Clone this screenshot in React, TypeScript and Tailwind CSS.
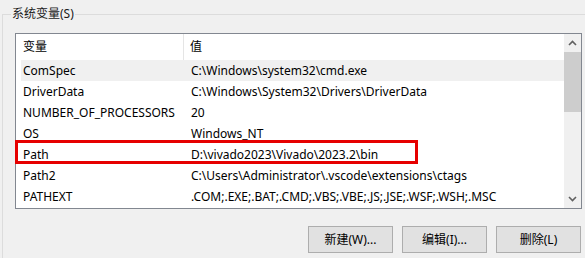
import React from "react";

const ROWS = [
  { name: "ComSpec", value: "C:\\Windows\\system32\\cmd.exe", hot: true },
  { name: "DriverData", value: "C:\\Windows\\System32\\Drivers\\DriverData" },
  { name: "NUMBER_OF_PROCESSORS", value: "20" },
  { name: "OS", value: "Windows_NT" },
  { name: "Path", value: "D:\\vivado2023\\Vivado\\2023.2\\bin" },
  { name: "Path2", value: "C:\\Users\\Administrator\\.vscode\\extensions\\ctags" },
  { name: "PATHEXT", value: ".COM;.EXE;.BAT;.CMD;.VBS;.VBE;.JS;.JSE;.WSF;.WSH;.MSC" },
];

const FONT = "font-['Segoe_UI','Noto_Sans','Noto_Sans_CJK_SC',sans-serif]";

function Chevron({ up }: { up?: boolean }) {
  return (
    <svg width="9" height="6" viewBox="0 0 9 6" fill="none" stroke="#606060" strokeWidth="1.6">
      {up ? <path d="M1 5 L4.5 1.5 L8 5" /> : <path d="M1 1 L4.5 4.5 L8 1" />}
    </svg>
  );
}

function Button({ label }: { label: string }) {
  return (
    <button className="w-[85px] h-[27px] border border-[#adadad] bg-[#e1e1e1] text-[12px] text-black flex items-center justify-center">
      {label}
    </button>
  );
}

export default function App() {
  return (
    <div className={`relative w-[585px] h-[258px] overflow-hidden bg-[#f0f0f0] pl-[2px] pt-[6px] text-[12px] leading-[16px] text-black ${FONT}`}>
      <fieldset className="border-t border-l border-[#dcdcdc] h-[260px]">
        <legend className="ml-[8px] px-[1px] text-[#1a1a1a]">系统变量(S)</legend>

        <div className="ml-[12px] mt-[11px] w-[567px] h-[176px] border border-[#828790] bg-white flex">
          <div className="flex-1 flex flex-col">
            {/* column headers */}
            <div className="h-[26px] flex">
              <div className="w-[168px] pl-[7px] flex items-center border-r border-[#e5e5e5]">变量</div>
              <div className="flex-1 pl-[6px] flex items-center">值</div>
            </div>
            {ROWS.map((r) => (
              <div
                key={r.name}
                className={`ml-[5px] h-[21px] flex items-center ${r.hot ? "bg-[#f0f0f0]" : ""}`}
              >
                <div className="w-[168px] pl-[2px] whitespace-nowrap">{r.name}</div>
                <div className="flex-1 pl-[2px] whitespace-nowrap">{r.value}</div>
              </div>
            ))}
          </div>

          {/* vertical scrollbar */}
          <div className="w-[17px] bg-[#f0f0f0] flex flex-col">
            <div className="h-[18px] flex items-center justify-center">
              <Chevron up />
            </div>
            <div className="h-[60px] bg-[#cdcdcd]" />
            <div className="flex-1" />
            <div className="h-[18px] flex items-center justify-center">
              <Chevron />
            </div>
          </div>
        </div>

        <div className="mt-[17px] w-[578px] flex justify-end gap-[9px]">
          <Button label="新建(W)..." />
          <Button label="编辑(I)..." />
          <Button label="删除(L)" />
        </div>
      </fieldset>

      {/* red annotation box */}
      <div className="absolute left-[15px] top-[140px] w-[403px] h-[24px] border-[3px] border-[#e60000]" />
    </div>
  );
}
